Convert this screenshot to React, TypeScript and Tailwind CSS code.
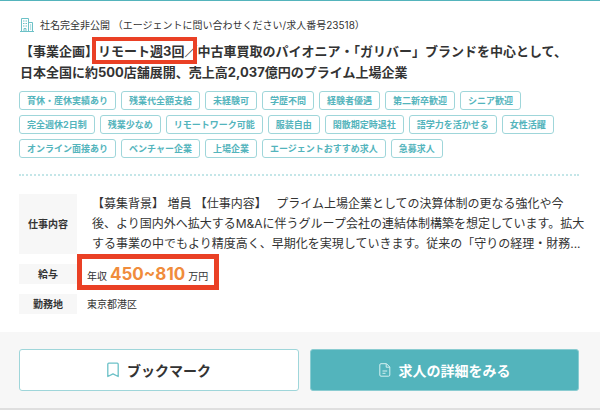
const tagRows = [
  ["育休・産休実績あり", "残業代全額支給", "未経験可", "学歴不問", "経験者優遇", "第二新卒歓迎", "シニア歓迎"],
  ["完全週休2日制", "残業少なめ", "リモートワーク可能", "服装自由", "閑散期定時退社", "語学力を活かせる", "女性活躍"],
  ["オンライン面接あり", "ベンチャー企業", "上場企業", "エージェントおすすめ求人", "急募求人"],
];

function BuildingIcon() {
  return (
    <svg className="h-[14px] w-[14px] shrink-0" viewBox="0 0 14 14" fill="none" stroke="#6cc1c7" aria-hidden="true">
      <path d="M0 13.5h14M1.5 13.5V.5h7v13M8.5 4.5h4v9" />
      <path d="M4 13v-2.500h2V13" />
      <path d="M3 3h1.500M5.500 3H7M3 5.500h1.500M5.500 5.500H7M3 8h1.500M5.500 8H7M10 7h1.200M10 9h1.200M10 11h1.200" />
    </svg>
  );
}

function BookmarkIcon() {
  return (
    <svg className="h-[16px] w-[12px] shrink-0" viewBox="0 0 12 16" fill="none" stroke="#6cc1c7" strokeWidth="1.3" strokeLinejoin="round" aria-hidden="true">
      <path d="M.8 2.200Q.8 1.200 1.800 1.200H10.200Q11.200 1.200 11.200 2.200V14.500L6 11.800.8 14.500Z" />
    </svg>
  );
}

function DocumentIcon() {
  return (
    <svg className="h-[14px] w-[12px] shrink-0" viewBox="0 0 12 14" fill="none" stroke="#d5f0f1" strokeLinejoin="round" aria-hidden="true">
      <path d="M2 .7H7.500L10.800 4V12Q10.800 13.200 9.600 13.200H2Q.8 13.200.8 12V1.900Q.8.7 2 .7Z" />
      <path d="M7.200.8V4.200H10.700M3.500 8H8.200M3.500 10.300H6.500" />
    </svg>
  );
}

export default function App() {
  return (
    <article
      lang="ja"
      className="border-t border-b-2 border-t-[#53b4bc] border-b-[#dfdfdf] bg-white font-['Inter','Noto_Sans_CJK_JP',sans-serif] text-[#333]"
    >
      <div className="pt-4 pr-[21px] pb-[18px] pl-[19px]">
        <p className="flex h-4 items-center gap-[6px] pl-px text-[10px] leading-4">
          <BuildingIcon />
          <span>社名完全非公開 （エージェントに問い合わせください/求人番号23518）</span>
        </p>

        <h2 className="mt-2 pl-px text-[13px] leading-[21px] font-bold whitespace-nowrap">
          【事業企画】
          <span className="relative inline-block">
            リモート週3回／
            <span className="absolute -top-[4px] right-0 -bottom-[2px] -left-[6px] border-4 border-[#ea4025]" />
          </span>
          中古車買取のパイオニア・「ガリバー」ブランドを中心として、
          <br />
          日本全国に約500店舗展開、売上高2,037億円のプライム上場企業
        </h2>

        <div className="mt-2 flex flex-col gap-[5px]">
          {tagRows.map((row) => (
            <ul key={row[0]} className="flex gap-[5px]">
              {row.map((tag) => (
                <li
                  key={tag}
                  className="flex h-[19px] items-center rounded-[3px] border border-[#9fd6da] px-[7px] text-[9px] leading-4 font-bold whitespace-nowrap text-[#53b4bc]"
                >
                  {tag}
                </li>
              ))}
            </ul>
          ))}
        </div>

        <hr className="mt-4 border-t-2 border-dotted border-[#c4e6e8]" />

        <dl className="mt-[18px] grid grid-cols-[58px_1fr] gap-y-[10px]">
          <dt className="flex items-center justify-center bg-[#f7f7f7] text-[10px] font-bold">仕事内容</dt>
          <dd className="pl-[15px] text-[12px] leading-5 whitespace-nowrap">
            【募集背景】 増員 【仕事内容】　 プライム上場企業としての決算体制の更なる強化や今
            <br />
            後、より国内外へ拡大するM&amp;Aに伴うグループ会社の連結体制構築を想定しています。拡大
            <br />
            する事業の中でもより精度高く、早期化を実現していきます。従来の「守りの経理・財務...
          </dd>
          <dt className="flex h-5 items-center justify-center bg-[#f7f7f7] text-[10px] font-bold">給与</dt>
          <dd className="relative flex h-5 items-baseline gap-[3px] pl-[10px] text-[10px] leading-5">
            年収
            <strong className="text-[17px] text-[#f08c3c]">450~810</strong>
            万円
            <span className="absolute -top-[10px] left-0 h-9 w-[142px] border-5 border-[#ea4025]" />
          </dd>
          <dt className="flex h-5 items-center justify-center bg-[#f7f7f7] text-[10px] font-bold">勤務地</dt>
          <dd className="pl-[10px] text-[10px] leading-5">東京都港区</dd>
        </dl>
      </div>

      <div className="grid grid-cols-[280fr_269fr] gap-[11px] bg-[#f7f7f7] py-[17px] pr-[21px] pl-[19px] text-[14px] font-bold">
        <button type="button" className="flex h-[42px] items-center justify-center gap-2 rounded-[3px] border border-[#9fd6da] bg-white">
          <BookmarkIcon />
          ブックマーク
        </button>
        <button type="button" className="flex h-[42px] items-center justify-center gap-2 rounded-[3px] border border-[#8accd1] bg-[#53b4bc] text-white">
          <DocumentIcon />
          求人の詳細をみる
        </button>
      </div>
    </article>
  );
}
